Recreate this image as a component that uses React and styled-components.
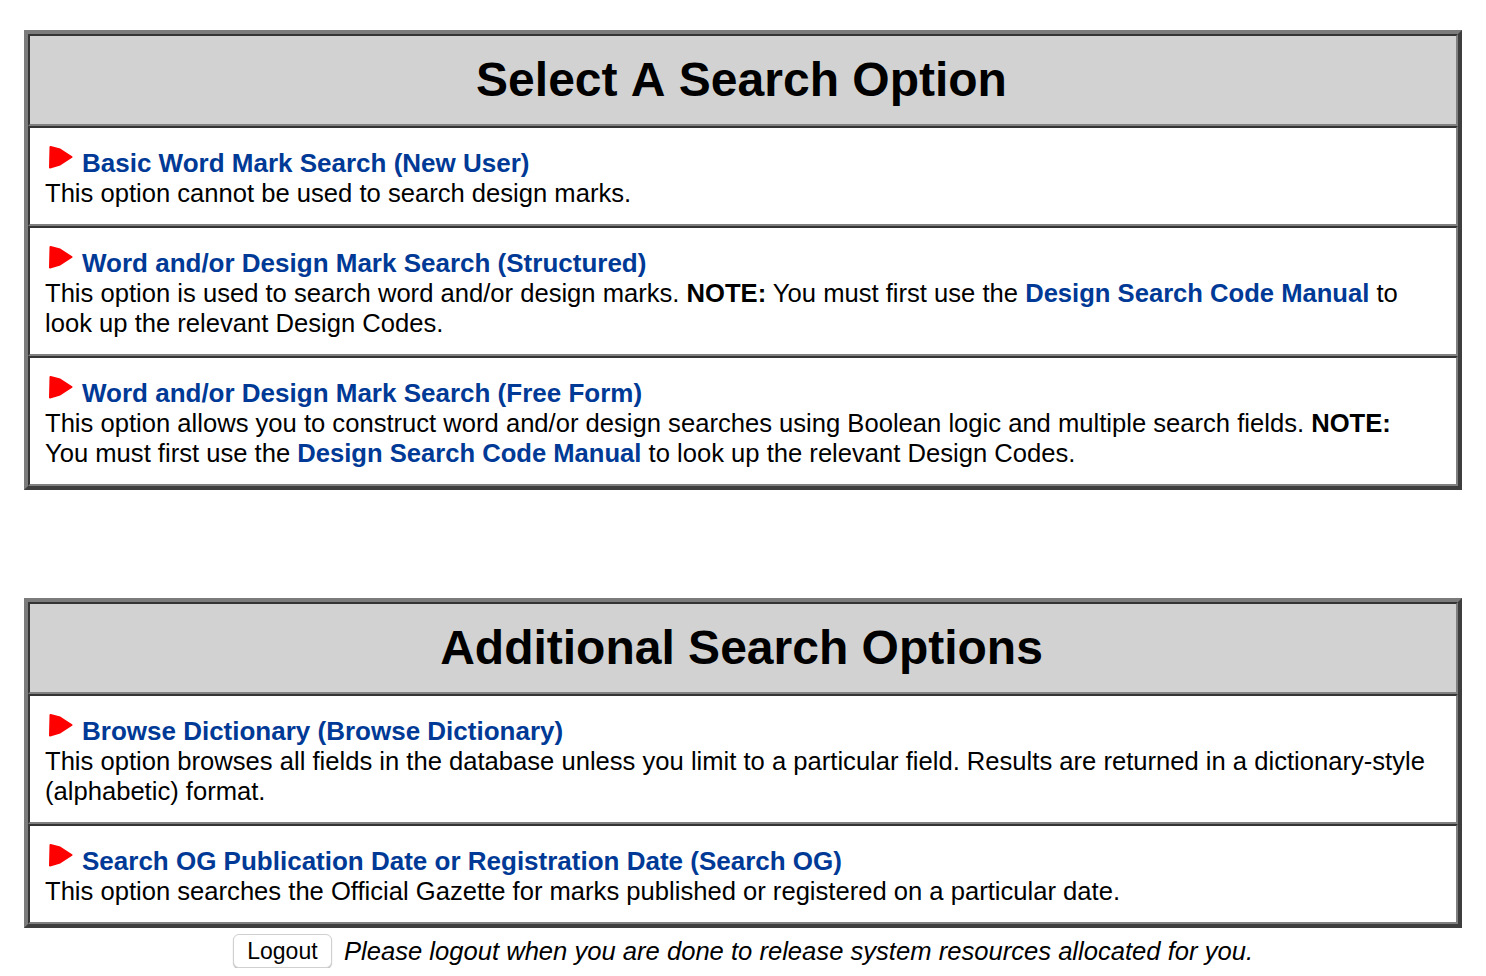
import React from "react";
import styled, { createGlobalStyle } from "styled-components";

const Global = createGlobalStyle`
  html, body { margin: 0; padding: 0; background: #fff; }
  body { font-family: "Liberation Sans", Arial, sans-serif; color: #000; }
`;

const Page = styled.div`
  padding: 30px 24px 0;
  display: flex;
  flex-direction: column;
`;

const Panel = styled.section`
  border-style: solid;
  border-width: 4px;
  border-color: #7b7b7b #3e3e3e #3e3e3e #7b7b7b;
  margin-bottom: ${(p) => p.$gap || 0}px;
`;

const Cell = styled.div`
  border-style: solid;
  border-width: 2px;
  border-color: #343434 #808080 #808080 #343434;
`;

const Header = styled(Cell)`
  background: #d2d2d2;
  height: 88px;
  display: flex;
  align-items: center;
  justify-content: center;
`;

const Title = styled.h1`
  margin: 0;
  padding-right: 3px;
  font-size: 48px;
  font-weight: 700;
  line-height: 56px;
  font-kerning: none;
`;

const Row = styled(Cell)`
  padding: 20px 20px 16px 15px;
  font-size: 25.6px;
  line-height: 30px;
`;

const Heading = styled.div`
  display: flex;
  align-items: center;
  height: 30px;
  font-size: 26px;
`;

const Arrow = styled.svg`
  width: 26px;
  height: 26px;
  margin: -12px 9px 0 2px;
  flex: none;
  filter: blur(0.6px);
`;

const Link = styled.a`
  color: #003a96;
  font-weight: 700;
  text-decoration: none;
`;

const Footer = styled.div`
  display: flex;
  justify-content: center;
  align-items: center;
  gap: 12px;
  margin-top: 6px;
`;

const Button = styled.button`
  width: 99px;
  height: 34px;
  padding: 0;
  border: 1px solid #d0d0d0;
  border-radius: 6px;
  background: #fff;
  box-shadow: 0 1px 1px #bbb;
  font: 23px "Liberation Sans", Arial, sans-serif;
  color: #000;
`;

const Note = styled.em`
  font-size: 25.6px;
  line-height: 34px;
`;

const Marker = () => (
  <Arrow viewBox="0 0 26 26">
    <path
      d="M3.5 3 L13 5.5 L24.5 13 L13 20.5 L3 23.5 Z"
      fill="#fe0000"
      stroke="#fe0000"
      strokeWidth="2"
      strokeLinejoin="round"
    />
  </Arrow>
);

const Option = ({ title, children }) => (
  <Row>
    <Heading>
      <Marker />
      <Link href="#">{title}</Link>
    </Heading>
    {children}
  </Row>
);

const Manual = () => <Link href="#">Design Search Code Manual</Link>;

export default function App() {
  return (
    <Page>
      <Global />
      <Panel $gap={108}>
        <Header>
          <Title>Select A Search Option</Title>
        </Header>
        <Option title="Basic Word Mark Search (New User)">
          This option cannot be used to search design marks.
        </Option>
        <Option title="Word and/or Design Mark Search (Structured)">
          This option is used to search word and/or design marks. <b>NOTE:</b> You must first use the <Manual /> to look up the relevant Design Codes.
        </Option>
        <Option title="Word and/or Design Mark Search (Free Form)">
          This option allows you to construct word and/or design searches using Boolean logic and multiple search fields. <b>NOTE:</b> You must first use the <Manual /> to look up the relevant Design Codes.
        </Option>
      </Panel>
      <Panel>
        <Header>
          <Title>Additional Search Options</Title>
        </Header>
        <Option title="Browse Dictionary (Browse Dictionary)">
          This option browses all fields in the database unless you limit to a particular field. Results are returned in a dictionary-style (alphabetic) format.
        </Option>
        <Option title="Search OG Publication Date or Registration Date (Search OG)">
          This option searches the Official Gazette for marks published or registered on a particular date.
        </Option>
      </Panel>
      <Footer>
        <Button>Logout</Button>
        <Note>Please logout when you are done to release system resources allocated for you.</Note>
      </Footer>
    </Page>
  );
}
